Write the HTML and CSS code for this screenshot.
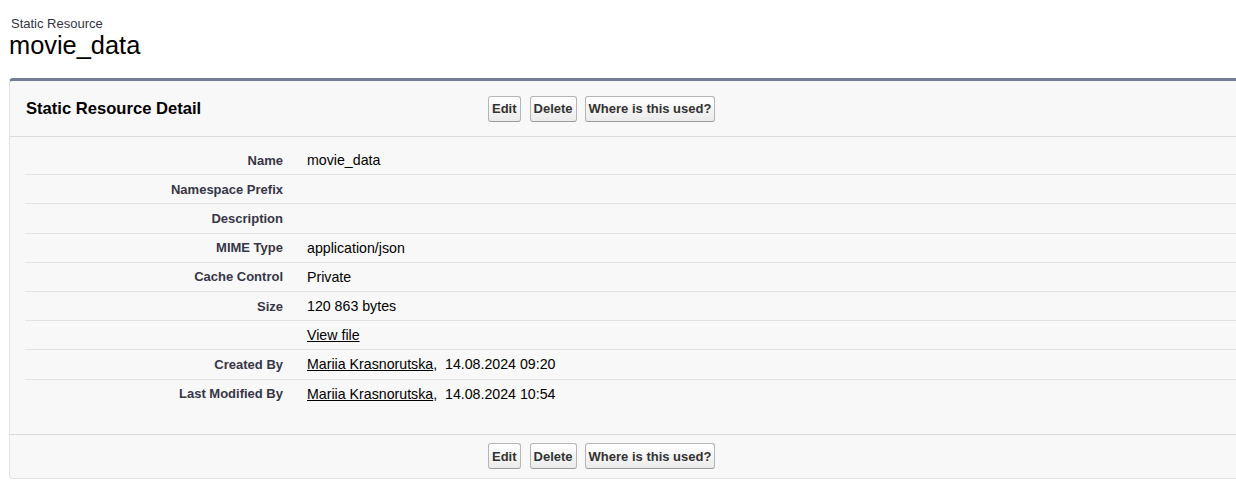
FILE: index.html
```html
<!DOCTYPE html>
<html lang="en">
<head>
<meta charset="utf-8">
<title>Static Resource: movie_data</title>
<link rel="stylesheet" href="styles.css">
</head>
<body>
<div class="page">
  <div class="page-head">
    <div class="page-type">Static Resource</div>
    <h1 class="page-desc">movie_data</h1>
  </div>

  <div class="block">
    <div class="block-head">
      <h2 class="block-title">Static Resource Detail</h2>
      <div class="btns">
        <button class="btn">Edit</button>
        <button class="btn">Delete</button>
        <button class="btn">Where is this used?</button>
      </div>
    </div>

    <div class="block-body">
      <div class="row"><div class="lbl">Name</div><div class="val">movie_data</div></div>
      <div class="row"><div class="lbl">Namespace Prefix</div><div class="val"></div></div>
      <div class="row"><div class="lbl">Description</div><div class="val"></div></div>
      <div class="row"><div class="lbl">MIME Type</div><div class="val">application/json</div></div>
      <div class="row"><div class="lbl">Cache Control</div><div class="val">Private</div></div>
      <div class="row"><div class="lbl">Size</div><div class="val">120 863 bytes</div></div>
      <div class="row"><div class="lbl"></div><div class="val"><a href="#" class="lnk">View file</a></div></div>
      <div class="row"><div class="lbl">Created By</div><div class="val"><a href="#" class="lnk">Mariia Krasnorutska</a>,&nbsp; 14.08.2024 09:20</div></div>
      <div class="row"><div class="lbl">Last Modified By</div><div class="val"><a href="#" class="lnk">Mariia Krasnorutska</a>,&nbsp; 14.08.2024 10:54</div></div>
    </div>

    <div class="block-foot">
      <div class="spacer"></div>
      <div class="btns">
        <button class="btn">Edit</button>
        <button class="btn">Delete</button>
        <button class="btn">Where is this used?</button>
      </div>
    </div>
  </div>
</div>
</body>
</html>
```

FILE: styles.css
```css
* { box-sizing: border-box; }

html, body {
  margin: 0;
  padding: 0;
  background: #ffffff;
  overflow-x: hidden;
}

body {
  font-family: "Liberation Sans", Arial, sans-serif;
  color: #000;
}

.page {
  padding: 0 0 0 9px;
}

.page-head {
  padding: 16px 0 0 0;
  height: 78px;
}

.page-type {
  font-size: 13px;
  line-height: 16px;
  color: #333344;
  padding-left: 2px;
}

.page-desc {
  margin: 0;
  font-size: 25.4px;
  font-weight: normal;
  line-height: 27px;
  color: #000;
}

.block {
  margin-right: -20px;
  background: #f8f8f8;
  border: 1px solid #e3e4e6;
  border-top: 3px solid #747e96;
  border-radius: 4px;
}

.block-head {
  display: grid;
  grid-template-columns: 478px 1fr;
  align-items: center;
  height: 56px;
  border-bottom: 1px solid #dbdbdb;
}

.block-title {
  margin: 0;
  padding-left: 16px;
  font-size: 16.6px;
  font-weight: bold;
  color: #000;
}

.btns {
  display: flex;
  gap: 8px;
  align-items: center;
}

.btn {
  font-family: "Liberation Sans", Arial, sans-serif;
  font-size: 13px;
  font-weight: bold;
  color: #333;
  height: 26px;
  padding: 0 3px;
  margin: 0;
  border: 1px solid #b5b5b5;
  border-bottom-color: #9c9c9c;
  border-radius: 3px;
  background: linear-gradient(#ffffff, #ebebeb);
  cursor: pointer;
}

.btns .btn:first-child {
  margin-right: 1px;
}

.block-body {
  padding: 9px 0 26px 15px;
}

.row {
  display: grid;
  grid-template-columns: 268px 1fr;
  align-items: center;
  height: 29.2px;
  border-bottom: 1px solid #e3e3e3;
}

.row:last-child {
  border-bottom: none;
  height: 28px;
}

.lbl {
  text-align: right;
  padding-right: 10px;
  font-size: 13px;
  font-weight: bold;
  color: #363646;
}

.val {
  padding-left: 14px;
  font-size: 14.2px;
  color: #000;
}

.lnk {
  color: #000;
  text-decoration: underline;
}

.block-foot {
  display: grid;
  grid-template-columns: 478px 1fr;
  align-items: center;
  height: 44px;
  border-top: 1px solid #dbdbdb;
}
```
